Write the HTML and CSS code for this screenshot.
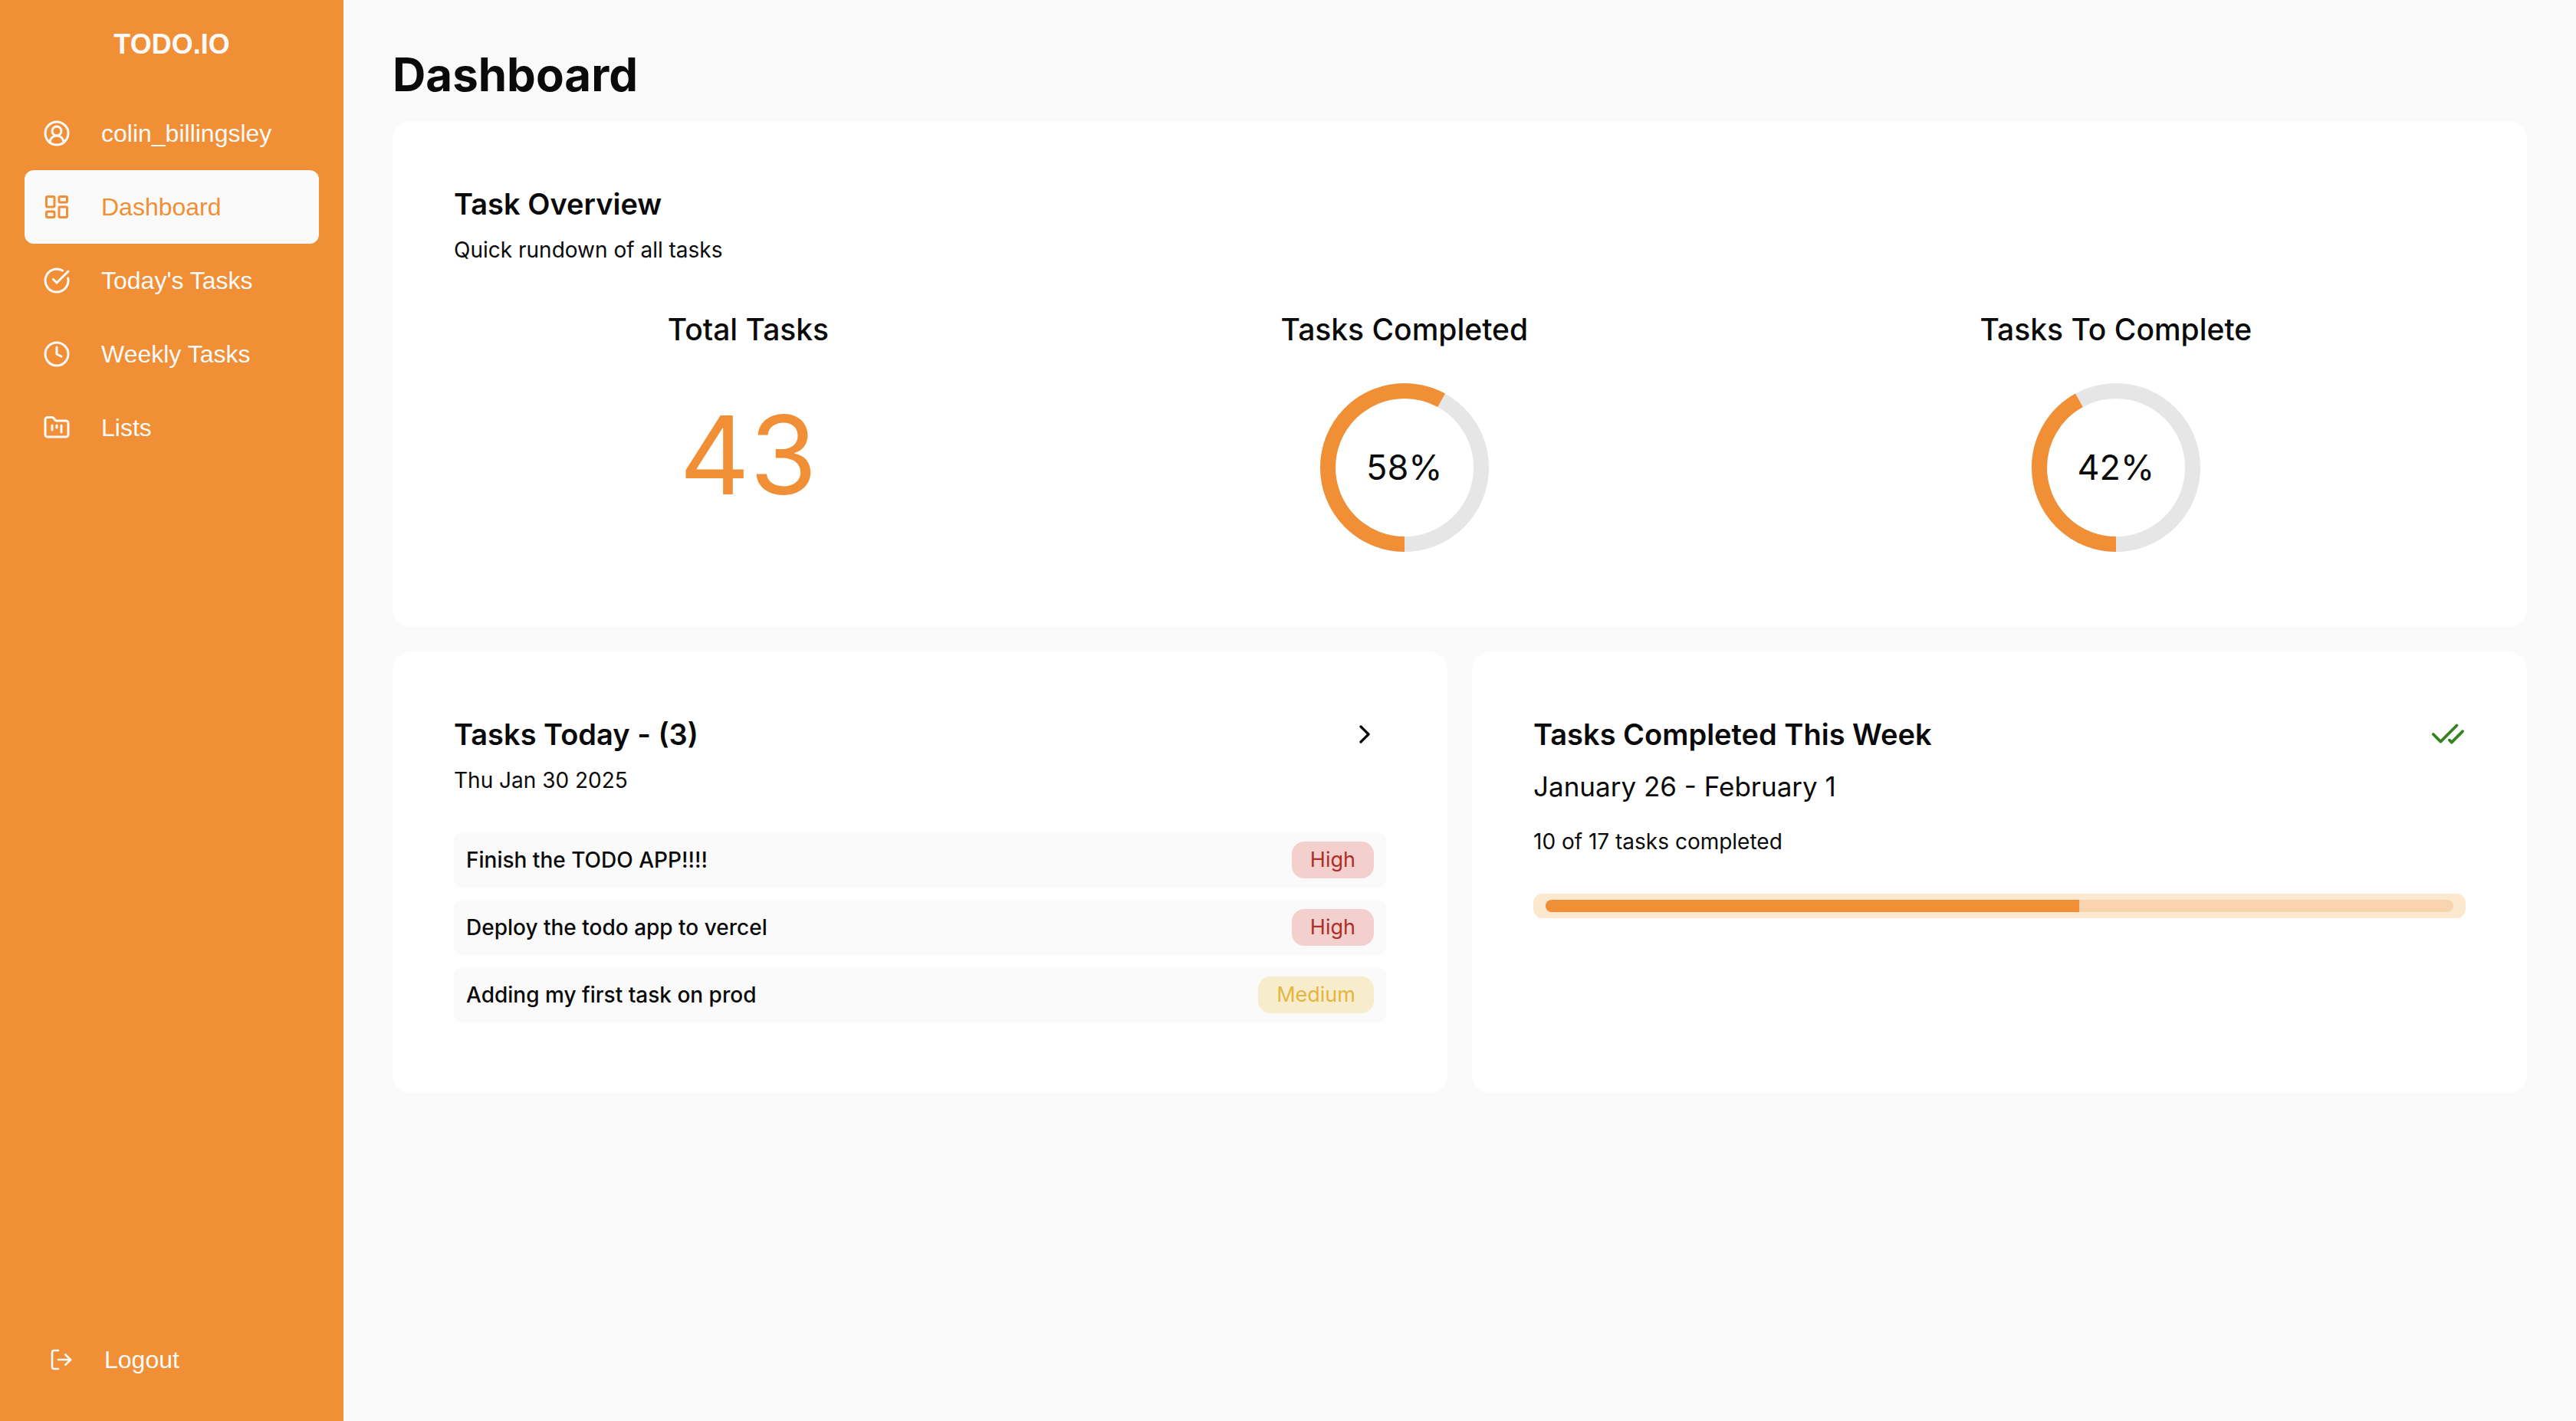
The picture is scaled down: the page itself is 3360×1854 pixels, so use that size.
FILE: index.html
```html
<!DOCTYPE html>
<html lang="en">
<head>
<meta charset="utf-8">
<meta name="viewport" content="width=device-width, initial-scale=1">
<title>Dashboard - TODO.IO</title>
<link rel="stylesheet" href="styles.css">
</head>
<body>
<div class="app">
  <aside class="sidebar">
    <div class="brand">TODO.IO</div>
    <nav class="nav">
      <a class="nav-item" href="#profile">
        <svg class="icon" viewBox="0 0 24 24" aria-hidden="true"><path d="M18 20a6 6 0 0 0-12 0"/><circle cx="12" cy="10" r="4"/><circle cx="12" cy="12" r="10"/></svg>
        <span>colin_billingsley</span>
      </a>
      <a class="nav-item active" href="#dashboard" aria-current="page">
        <svg class="icon" viewBox="0 0 24 24" aria-hidden="true"><rect x="3" y="3" width="7" height="9" rx="1"/><rect x="14" y="3" width="7" height="5" rx="1"/><rect x="14" y="12" width="7" height="9" rx="1"/><rect x="3" y="16" width="7" height="5" rx="1"/></svg>
        <span>Dashboard</span>
      </a>
      <a class="nav-item" href="#today">
        <svg class="icon" viewBox="0 0 24 24" aria-hidden="true"><path d="M21.801 10A10 10 0 1 1 17 3.335"/><path d="m9 11 3 3L22 4"/></svg>
        <span>Today's Tasks</span>
      </a>
      <a class="nav-item" href="#weekly">
        <svg class="icon" viewBox="0 0 24 24" aria-hidden="true"><circle cx="12" cy="12" r="10"/><path d="M12 6v6l4 2"/></svg>
        <span>Weekly Tasks</span>
      </a>
      <a class="nav-item" href="#lists">
        <svg class="icon" viewBox="0 0 24 24" aria-hidden="true"><path d="M4 20h16a2 2 0 0 0 2-2V8a2 2 0 0 0-2-2h-7.930a2 2 0 0 1-1.660-.900l-.820-1.200A2 2 0 0 0 7.930 3H4a2 2 0 0 0-2 2v13c0 1.100.900 2 2 2Z"/><path d="M8 10v4"/><path d="M12 10v2"/><path d="M16 10v6"/></svg>
        <span>Lists</span>
      </a>
    </nav>
    <button class="logout" type="button">
      <svg class="icon icon-small" viewBox="0 0 24 24" aria-hidden="true"><path d="M9 21H5a2 2 0 0 1-2-2V5a2 2 0 0 1 2-2h4"/><path d="m16 17 5-5-5-5"/><path d="M21 12H9"/></svg>
      <span>Logout</span>
    </button>
  </aside>

  <main class="main">
    <h1 class="page-title">Dashboard</h1>
    <div class="cards">
      <section class="card card-wide">
        <h2 class="card-title">Task Overview</h2>
        <p class="note">Quick rundown of all tasks</p>
        <div class="stats">
          <div class="stat">
            <h3 class="stat-label">Total Tasks</h3>
            <div class="stat-number">43</div>
          </div>
          <div class="stat">
            <h3 class="stat-label">Tasks Completed</h3>
            <div class="ring">
              <svg class="ring-chart" viewBox="0 0 220 220" aria-hidden="true"><circle class="ring-track" cx="110" cy="110" r="100"/><circle class="ring-value" cx="110" cy="110" r="100" pathLength="100" stroke-dasharray="58 42" transform="rotate(90 110 110)"/></svg>
              <span class="ring-text">58%</span>
            </div>
          </div>
          <div class="stat">
            <h3 class="stat-label">Tasks To Complete</h3>
            <div class="ring">
              <svg class="ring-chart" viewBox="0 0 220 220" aria-hidden="true"><circle class="ring-track" cx="110" cy="110" r="100"/><circle class="ring-value" cx="110" cy="110" r="100" pathLength="100" stroke-dasharray="42 58" transform="rotate(90 110 110)"/></svg>
              <span class="ring-text">42%</span>
            </div>
          </div>
        </div>
      </section>

      <section class="card">
        <div class="card-head">
          <h2 class="card-title">Tasks Today - (3)</h2>
          <a class="more" href="#today" aria-label="Open today's tasks"><svg class="icon icon-chevron" viewBox="0 0 24 24" aria-hidden="true"><path d="m9 18 6-6-6-6"/></svg></a>
        </div>
        <p class="note">Thu Jan 30 2025</p>
        <ul class="tasks">
          <li class="task"><span>Finish the TODO APP!!!!</span><span class="badge high">High</span></li>
          <li class="task"><span>Deploy the todo app to vercel</span><span class="badge high">High</span></li>
          <li class="task"><span>Adding my first task on prod</span><span class="badge medium">Medium</span></li>
        </ul>
      </section>

      <section class="card">
        <div class="card-head">
          <h2 class="card-title">Tasks Completed This Week</h2>
          <svg class="icon icon-done" viewBox="0 0 24 24" aria-hidden="true"><path d="M18 6 7 17l-5-5"/><path d="m22 10-7.500 7.500L13 16"/></svg>
        </div>
        <p class="range">January 26 - February 1</p>
        <label class="progress-label" for="week-progress">10 of 17 tasks completed</label>
        <div class="progress-frame"><progress class="progress" id="week-progress" value="10" max="17"></progress></div>
      </section>
    </div>
  </main>
</div>
</body>
</html>
```
FILE: styles.css
```css
:root {
  --accent: #f08f35;
  --ink: #0a0a0a;
  --page: #fafafa;
}

* {
  box-sizing: border-box;
  margin: 0;
  padding: 0;
}

body {
  background: var(--page);
  color: var(--ink);
  font-family: Inter, sans-serif;
}

.app {
  display: flex;
  min-height: 100vh;
}

.icon {
  flex: none;
  width: 36px;
  height: 36px;
  fill: none;
  stroke: currentColor;
  stroke-width: 2;
  stroke-linecap: round;
  stroke-linejoin: round;
}

.icon-small { width: 32px; height: 32px; }
.icon-chevron { width: 40px; height: 40px; }
.icon-done { width: 46px; height: 46px; color: #35821f; }

/* Sidebar */
.sidebar {
  display: flex;
  flex-direction: column;
  flex: none;
  width: 448px;
  padding: 32px;
  background: var(--accent);
  color: var(--page);
  font-family: "Liberation Sans", Arial, sans-serif;
}

.brand {
  margin-bottom: 42px;
  font-size: 36px;
  font-weight: 700;
  line-height: 52px;
  text-align: center;
}

.nav-item,
.logout {
  display: flex;
  align-items: center;
  gap: 40px;
  height: 96px;
  padding: 0 24px;
  border-radius: 12px;
  color: inherit;
  font-size: 32px;
  text-decoration: none;
}

.nav-item.active {
  background: var(--page);
  color: var(--accent);
}

.logout {
  margin-top: auto;
  padding: 0 32px;
  border: 0;
  background: none;
  font-family: inherit;
  cursor: pointer;
}

/* Main column */
.main {
  flex: 1;
  min-width: 0;
  padding: 62px 64px;
}

.page-title {
  margin-bottom: 26px;
  font-size: 60px;
  font-weight: 700;
  line-height: 70px;
}

.cards {
  display: grid;
  grid-template-columns: 1fr 1fr;
  gap: 32px;
}

.card {
  padding: 80px 80px 92px;
  border-radius: 24px;
  background: #fff;
}

.card-wide {
  grid-column: 1 / -1;
  padding-bottom: 98px;
}

.card-head {
  display: flex;
  align-items: center;
  justify-content: space-between;
}

.card-title {
  font-size: 38px;
  font-weight: 600;
  line-height: 56px;
}

.note {
  margin-top: 12px;
  font-size: 28px;
  line-height: 40px;
}

/* Overview figures */
.stats {
  display: flex;
  justify-content: space-around;
  margin: 56px -16px 0;
}

.stat {
  display: flex;
  flex-direction: column;
  align-items: center;
  gap: 42px;
}

.stat-label {
  font-size: 39px;
  font-weight: 500;
  line-height: 56px;
}

.stat-number {
  color: var(--accent);
  font-size: 142px;
  line-height: 186px;
}

.ring {
  display: grid;
  place-items: center;
}

.ring-chart,
.ring-text {
  grid-area: 1 / 1;
}

.ring-chart {
  width: 220px;
  height: 220px;
  fill: none;
  stroke-width: 20;
}

.ring-track { stroke: #e6e6e6; }
.ring-value { stroke: var(--accent); }
.ring-text { font-size: 45px; line-height: 56px; }

/* Today's tasks */
.more {
  display: flex;
  padding: 0 8px;
  color: inherit;
}

.tasks {
  display: flex;
  flex-direction: column;
  gap: 16px;
  margin-top: 48px;
  list-style: none;
}

.task {
  display: flex;
  align-items: center;
  justify-content: space-between;
  padding: 12px 16px;
  border-radius: 12px;
  background: var(--page);
  font-size: 28px;
  font-weight: 500;
}

.badge {
  padding: 0 24px;
  border-radius: 16px;
  font-size: 27px;
  font-weight: 400;
  line-height: 48px;
}

.high { background: #f3cfce; color: #ac2f28; }
.medium { background: #f7edcd; color: #e3b63f; }

/* Weekly progress */
.range {
  margin-top: 12px;
  font-size: 35px;
  line-height: 56px;
}

.progress-label {
  display: block;
  margin-top: 24px;
  font-size: 28px;
  line-height: 40px;
}

.progress-frame {
  display: flex;
  margin-top: 48px;
  padding: 8px 16px;
  border-radius: 12px;
  background: #fce7cf;
}

.progress {
  width: 100%;
  height: 16px;
  overflow: hidden;
  border: 0;
  border-radius: 8px;
  background: #f9d4ae;
  appearance: none;
}

.progress::-webkit-progress-bar { background: #f9d4ae; }
.progress::-webkit-progress-value { background: var(--accent); }
.progress::-moz-progress-bar { background: var(--accent); }
```
